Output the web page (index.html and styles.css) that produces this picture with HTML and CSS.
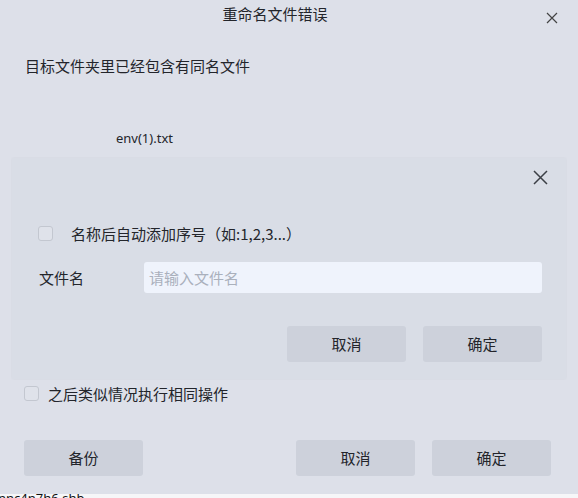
FILE: index.html
```html
<!DOCTYPE html>
<html lang="zh-CN">
<head>
<meta charset="utf-8">
<title>重命名文件错误</title>
<link rel="stylesheet" href="styles.css">
</head>
<body>
<div class="dialog">
  <div class="titlebar">
    <div class="title">重命名文件错误</div>
    <div class="close">
      <svg width="12" height="12" viewBox="0 0 12 12"><path d="M1 1L11 11M11 1L1 11" stroke="#444" stroke-width="1.2" fill="none"/></svg>
    </div>
  </div>
  <div class="message">目标文件夹里已经包含有同名文件</div>
  <div class="filename">env(1).txt</div>
  <div class="panel">
    <div class="panel-head">
      <svg width="15" height="15" viewBox="0 0 15 15"><path d="M1 1L14 14M14 1L1 14" stroke="#3c3f46" stroke-width="1.5" fill="none"/></svg>
    </div>
    <div class="check-row">
      <span class="checkbox"></span>
      <span class="check-label">名称后自动添加序号（如:1,2,3...）</span>
    </div>
    <div class="form-row">
      <span class="form-label">文件名</span>
      <div class="input">请输入文件名</div>
    </div>
    <div class="panel-actions">
      <div class="btn">取消</div>
      <div class="btn">确定</div>
    </div>
  </div>
  <div class="apply-row">
    <span class="checkbox small"></span>
    <span class="apply-label">之后类似情况执行相同操作</span>
  </div>
  <div class="actions">
    <div class="btn">备份</div>
    <div class="spacer"></div>
    <div class="btn">取消</div>
    <div class="btn">确定</div>
  </div>
</div>
<div class="strip"><span class="strip-text">nnc4n7h6.shb</span></div>
</body>
</html>
```
FILE: styles.css
```css
html, body {
  margin: 0;
  padding: 0;
}
body {
  width: 578px;
  height: 498px;
  overflow: hidden;
  background: #dde0e9;
  font-family: "Noto Sans CJK SC", "Noto Sans", sans-serif;
  color: #23252b;
  display: flex;
  flex-direction: column;
}
.dialog {
  height: 494px;
  flex: none;
  display: flex;
  flex-direction: column;
}
.titlebar {
  display: flex;
  align-items: center;
  height: 30px;
}
.title {
  flex: 1;
  text-align: center;
  padding-left: 10px;
  font-size: 15px;
  line-height: 30px;
  margin-top: -2px;
}
.close {
  width: 24px;
  height: 24px;
  margin-right: 14px;
  margin-top: 6px;
  display: flex;
  align-items: center;
  justify-content: center;
}
.message {
  margin: 25px 0 0 25px;
  font-size: 15px;
  line-height: 22px;
}
.filename {
  margin: 52px 0 0 116px;
  font-family: "Noto Sans", "Open Sans", sans-serif;
  font-size: 13px;
  line-height: 18px;
}
.panel {
  margin: 11px 12px 0 12px;
  height: 221px;
  flex: none;
  background: #d9dde6;
  box-shadow: 0 0 2px rgba(0,0,0,0.05);
  display: flex;
  flex-direction: column;
  padding: 0 24px 17px 26px;
  box-sizing: border-box;
}
.panel-head {
  display: flex;
  justify-content: flex-end;
  padding-top: 12px;
  margin-right: -6px;
  height: 15px;
}
.check-row {
  display: flex;
  align-items: center;
  margin-top: 38px;
  height: 20px;
}
.checkbox {
  width: 14px;
  height: 14px;
  border: 1px solid #c3c7d0;
  border-radius: 3px;
  background: #dfe2ea;
  box-sizing: border-box;
  flex: none;
}
.check-row .checkbox {
  width: 15px;
  height: 15px;
}
.check-label {
  margin-left: 18px;
  font-size: 15px;
}
.form-row {
  display: flex;
  align-items: center;
  margin-top: 19px;
}
.form-label {
  width: 105px;
  margin-left: 1px;
  font-size: 15px;
}
.input {
  flex: 1;
  height: 31px;
  line-height: 31px;
  background: #eff3fc;
  border-radius: 3px;
  padding-left: 5px;
  font-size: 15px;
  color: #aab0bc;
  box-sizing: border-box;
}
.panel-actions {
  margin-top: auto;
  display: flex;
  justify-content: flex-end;
  gap: 17px;
}
.btn {
  width: 119px;
  height: 36px;
  line-height: 36px;
  text-align: center;
  background: #cdd1db;
  border-radius: 3px;
  font-size: 15px;
  color: #23252b;
}
.apply-row {
  display: flex;
  align-items: center;
  margin: 4px 0 0 24px;
  height: 20px;
}
.apply-label {
  margin-left: 9px;
  font-size: 15px;
}
.checkbox.small {
  width: 15px;
  height: 15px;
}
.actions {
  display: flex;
  gap: 17px;
  margin: 37px 27px 0 24px;
}
.spacer {
  flex: 1;
}
.strip {
  height: 4px;
  flex: none;
  background: #f6f6f8;
  overflow: hidden;
}
.strip-text {
  display: block;
  margin-top: -3px;
  margin-left: -2px;
  font-family: "Noto Sans", sans-serif;
  font-size: 13px;
  line-height: 14px;
  color: #111;
}
```
